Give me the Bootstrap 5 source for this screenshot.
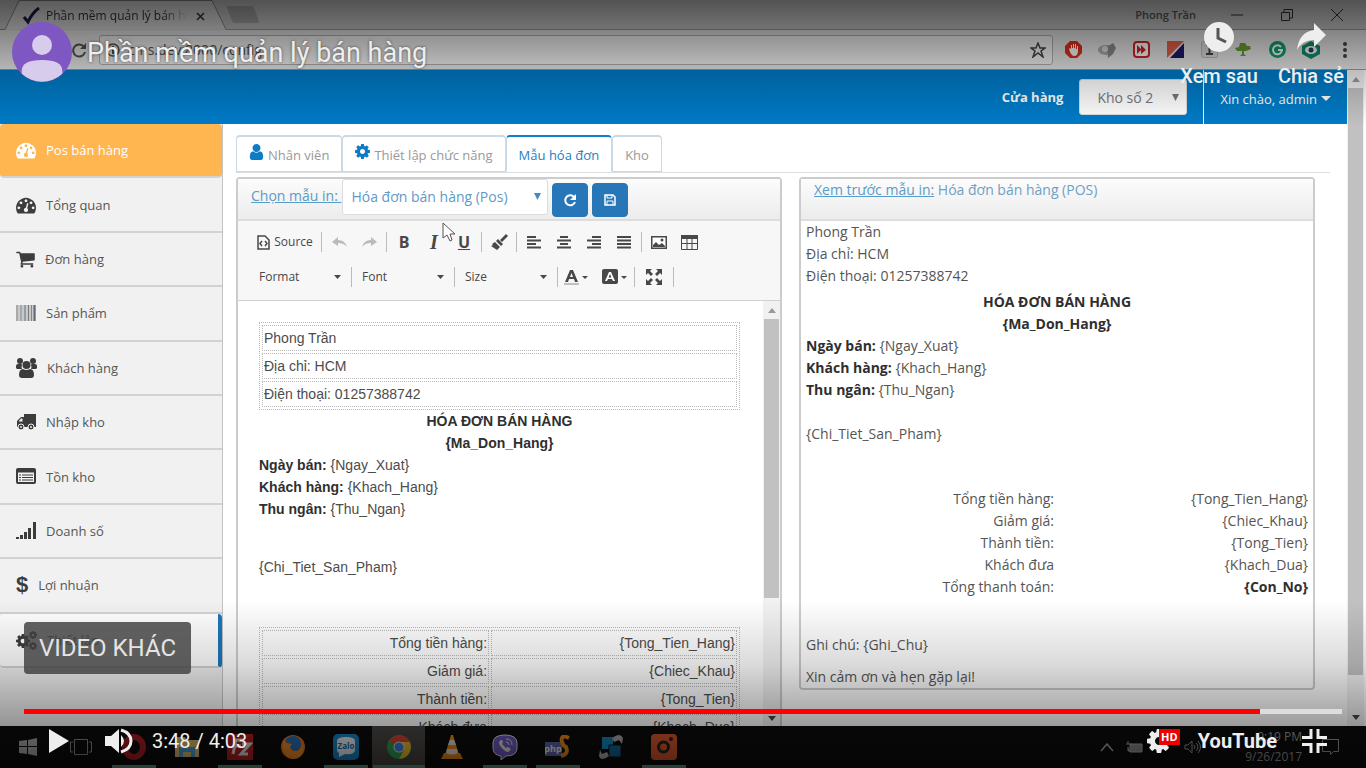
<!DOCTYPE html>
<html lang="vi">
<head>
<meta charset="utf-8">
<meta name="viewport" content="width=device-width, initial-scale=1">
<title>Phần mềm quản lý bán hàng</title>
<link href="https://cdn.jsdelivr.net/npm/bootstrap@5.3.0/dist/css/bootstrap.min.css" rel="stylesheet">
<script defer src="https://cdn.jsdelivr.net/npm/bootstrap@5.3.0/dist/js/bootstrap.bundle.min.js"></script>
<style>
:root { --ui: "Open Sans", "Noto Sans", sans-serif; --yt: Roboto, "Liberation Sans", sans-serif; --doc: "Liberation Sans", Arial, sans-serif; }
body { font: 14px/22px var(--ui); color: #555; background: #000; }
svg { display: block; flex: none; }
button { font: inherit; color: inherit; background: none; border: 0; padding: 0; }
.ic { fill: currentColor; }
/* browser window */
.tabstrip { height: 30px; background: #cdcdcd; color: #333; font-size: 12px; }
.tabstrip .rest { border-bottom: 1px solid #999; }
.profile { font-size: 11px; font-weight: 600; color: #555; }
.page-tab { width: 226px; padding: 2px 18px 0 22px; }
.page-tab svg.outline { position: absolute; left: 0; top: 0; }
.tab-title { width: 142px; overflow: hidden; white-space: nowrap; -webkit-mask-image: linear-gradient(90deg, #000 82%, transparent); mask-image: linear-gradient(90deg, #000 82%, transparent); }
.win-btn { width: 50px; height: 29px; }
.toolbar { height: 40px; background: #e9e9e9; border-bottom: 1px solid #999; padding: 0 4px 0 71px; }
.address { height: 30px; border: 1px solid #b0b0b0; border-radius: 3px; background: #f4f4f4; padding: 0 6px; margin: 0 3px 0 12px; }
.address input { border: 0; background: none; outline: 0; color: #555; font-size: 14px; height: 26px; }
.ext { width: 34px; }
.ext svg { margin: auto; }
/* page */
.viewport { padding-right: 2px; }
.topbar { height: 54px; background: #007bc7; color: #fff; font-size: 13px; }
.topbar .form-select { width: 108px; height: 36px; font-size: 14px; color: #777; background-color: #fff; border: 1px solid #ddd; border-radius: 3px; padding: 0 17px; }
.arrow-select { appearance: none; background: #fff url("data:image/svg+xml,%3Csvg xmlns='http://www.w3.org/2000/svg' viewBox='0 0 14 14' width='7' height='7'%3E%3Cpath d='M0 0h14L7 14z' fill='%23777'/%3E%3C/svg%3E") no-repeat right 7px center; }
.topbar .arrow-select { background-size: 7px 7px; background-position: right 7px top 14px; }
.user-menu, .user-menu:hover { border-left: 1px solid #fff; padding: 3px 16px 0; color: #fff; }
.sidebar { width: 223px; background: #f1f1f1; border-right: 1px solid #c4c4c4; font-size: 13px; }
.sidebar ul { display: grid; grid-auto-rows: 1fr; height: 544px; }
.sidebar a { color: #555; text-decoration: none; padding-left: 16px; gap: 10px; height: 100%; border-bottom: 2px solid #d2d2d2; }
.sidebar svg, .sidebar .dollar { color: #3c3c3c; }
.sidebar a.pos { background: #ffb650; color: #fff; border-radius: 4px; }
.sidebar a.pos svg { color: #fff; }
.sidebar a.current { background: #fff; border-right: 4px solid #1978bd; border-radius: 4px; }
.dollar { font: bold 22px/24px var(--doc); }
.sb { width: 17px; background: #f1f1f1; }
.sb i { height: 18px; flex: none; display: grid; place-items: center; }
.sb b { background: #c1c1c1; margin: 0 1px; }
.page-sb b { flex: 0 1 587px; }
.edit-sb { height: 426px; }
.edit-sb b { height: 279px; }
.content { padding: 11px 17px 0 13px; background: #fff; min-width: 0; }
.content .nav-tabs { border-bottom: 1px solid #ddd; --bs-nav-tabs-border-radius: 4px; }
.content .nav-tabs .nav-link { height: 37px; margin: 0; padding: 7px 12px; font-size: 13px; color: #999; border: 1px solid #c9d9e6; border-width: 2px 1px 1px; display: flex; gap: 4px; }
.content .nav-tabs .nav-link svg { color: #0e7cc4; }
.content .nav-tabs .nav-link.active { color: #2481c2; border-top-color: #0a82cb; border-bottom-color: #fff; }
.panels { display: grid; grid-template-columns: 546fr 516fr; column-gap: 17px; padding: 4px 15px 0 0; }
.box { border: 2px solid #ccc; border-radius: 4px; background: #fff; min-width: 0; }
.box-head { height: 42px; background: linear-gradient(#fcfcfc, #ececec); border-bottom: 2px solid #ddd; color: #6fa0c4; padding-left: 13px; }
.box-head a, .box-head label { color: #5a9bc8; }
.box-head label { padding-right: 1px; }
.box-head .arrow-select { width: 206px; height: 36px; border: 1px solid #ddd; border-radius: 3px; padding: 0 8px; color: #5f9ac6; background-image: url("data:image/svg+xml,%3Csvg xmlns='http://www.w3.org/2000/svg' viewBox='0 0 14 14' width='7' height='7'%3E%3Cpath d='M0 0h14L7 14z' fill='%23428bca'/%3E%3C/svg%3E"); background-position: right 6px top 13px; }
.box-head .btn { width: 36px; height: 34px; background: #2776b8; border-color: #2776b8; border-radius: 4px; padding: 0; display: grid; place-items: center; }
.tools { display: grid; align-content: start; row-gap: 5px; background: #f7f7f7; border-bottom: 1px solid #d1d1d1; padding: 6px 0 0 13px; height: 80px; color: #484848; font-size: 12px; }
.tools button { width: 30px; height: 30px; display: flex; align-items: center; justify-content: center; gap: 4px; }
.tools .source { width: 68px; }
.tools .pick { width: 34px; }
.tools .serif { font-family: "Liberation Serif", serif; }
.tools hr { width: 1px; height: 20px; margin: 5px 2px; border: 0; background: #bbb; opacity: 1; }
.tools select { width: 98px; height: 30px; border: 0; padding: 0 8px; color: #484848; appearance: none; background: url("data:image/svg+xml,%3Csvg xmlns='http://www.w3.org/2000/svg' viewBox='0 0 14 8' width='7' height='4'%3E%3Cpath d='M0 0h14L7 8z' fill='%23484848'/%3E%3C/svg%3E") no-repeat right 8px center; }
.edit-area { font-family: var(--doc); color: #4c4c4c; padding: 21px 23px 0 21px; }
.edit-area table { width: 100%; border: 1px dotted #bbb; border-collapse: separate; border-spacing: 2px; }
.edit-area td { border: 1px dotted #bbb; padding: 1px; }
.edit-area strong, .preview strong { color: #2f2f2f; }
.items-gap { padding: 36px 0 49px; }
.preview { padding: 0 5px; }
.preview table { margin: 21px 0 36px; }
.preview td { padding: 0 3px 0 0; width: 50%; }
.preview td:last-child { padding: 0; }
.thanks + .thanks { margin-top: 10px; }
/* task bar */
.taskbar { height: 42px; background: #0c0c0c; color: #999; padding-left: 1px; }
.task { width: 53px; height: 42px; display: grid; place-items: center; }
.task.open { background: linear-gradient(#5b9c83, #5b9c83) center bottom / 44px 3px no-repeat; }
.task.front { background: linear-gradient(#5b9c83, #5b9c83) center bottom / 52px 3px no-repeat, #4a4744; }
.tray { gap: 12px; padding-right: 27px; }
.tray-clock { font-size: 12px; line-height: 20px; margin-left: 32px; }
/* video player */
.yt-top { position: absolute; inset: 0 0 auto; height: 126px; background: linear-gradient(rgba(0,0,0,.6), rgba(0,0,0,.22) 55%, transparent); padding: 20px 22px 0 12px; font-family: var(--yt); color: #eee; text-shadow: 0 0 3px rgba(0,0,0,.6); }
.yt-top a { color: #eee; text-decoration: none; }
.yt-top h1 { font-size: 27px; line-height: 32px; font-weight: 400; margin: 17px 0 0; }
.avatar { margin-right: 15px; }
.yt-act { font-size: 20px; line-height: 24px; font-weight: 500; }
.yt-bottom { position: absolute; inset: auto 0 0; padding: 22px 24px 0; height: 168px; background: linear-gradient(transparent, rgba(0,0,0,.14) 38%, rgba(0,0,0,.38) 74%, rgba(0,0,0,.6)); font-family: var(--yt); color: #eee; }
.yt-more { height: 52px; width: 167px; border-radius: 4px; background: rgba(62,62,62,.82); font-size: 24px; color: #e4e4e4; align-self: start; }
.yt-bar { height: 5px; border-radius: 0; background: #ddd; margin-top: 35px; --bs-progress-bar-bg: #f00; }
.yt-ctl { height: 54px; padding: 0 15px 0 25px; }
.yt-time { font-size: 20px; margin-left: 19px; }
.yt-name { font: bold 20px/30px var(--yt); color: #eee; text-decoration: none; }
.hd { position: absolute; left: 12px; top: 0; width: 21px; height: 16px; background: #e00; color: #fff; font: bold 11px/16px var(--ui); text-align: center; }
.pointer { position: absolute; left: 204px; top: 43px; z-index: 2; }
.vol { margin-left: 36px; }
.gear { margin-right: 27px; }
.shrink { margin-left: 25px; }
</style>
</head>
<body>
<svg width="0" height="0" class="position-absolute" aria-hidden="true">
 <symbol id="gauge" viewBox="0 0 1792 1792"><path d="M384 1152q0-53-37.500-90.500t-90.500-37.500-90.500 37.500-37.500 90.500 37.500 90.500 90.500 37.500 90.500-37.500 37.500-90.500zm192-448q0-53-37.500-90.500t-90.500-37.500-90.500 37.500-37.500 90.500 37.500 90.500 90.500 37.500 90.500-37.500 37.500-90.500zm428 481l101-382q6-26-7.500-48.500t-38.500-29.500-48 6.500-30 39.500l-101 382q-60 5-107 43.500t-63 98.500q-20 77 20 146t117 89 146-20 89-117q16-60-6-117t-72-91zm660-33q0-53-37.500-90.500t-90.500-37.500-90.500 37.500-37.500 90.500 37.500 90.500 90.500 37.500 90.500-37.500 37.500-90.500zm-640-640q0-53-37.500-90.500t-90.500-37.500-90.500 37.500-37.500 90.500 37.500 90.500 90.500 37.500 90.500-37.500 37.500-90.500zm448 192q0-53-37.500-90.500t-90.500-37.500-90.500 37.500-37.500 90.500 37.500 90.500 90.500 37.500 90.500-37.500 37.500-90.500zm320 448q0 261-141 483-19 29-54 29h-1402q-35 0-54-29-141-221-141-483 0-182 71-348t191-286 286-191 348-71 348 71 286 191 191 286 71 348z"/></symbol>
 <symbol id="cog" viewBox="128 128 1536 1536"><path d="M1152 896q0-106-75-181t-181-75-181 75-75 181 75 181 181 75 181-75 75-181zm512-109v222q0 12-8 23t-20 13l-185 28q-19 54-39 91 35 50 107 138 10 12 10 25t-9 23q-27 37-99 108t-94 71q-12 0-26-9l-138-108q-44 23-91 38-16 136-29 186-7 28-36 28h-222q-14 0-24.500-8.500t-11.500-21.500l-28-184q-49-16-90-37l-141 107q-10 9-25 9-14 0-25-11-126-114-165-168-7-10-7-23 0-12 8-23 15-21 51-66.500t54-70.500q-27-50-41-99l-183-27q-13-2-21-12.500t-8-23.500v-222q0-12 8-23t19-13l186-28q14-46 39-92-40-57-107-138-10-12-10-24 0-10 9-23 26-36 98.500-107.500t94.500-71.500q13 0 26 10l138 107q44-23 91-38 16-136 29-186 7-28 36-28h222q14 0 24.500 8.500t11.500 21.500l28 184q49 16 90 37l142-107q9-9 24-9 13 0 25 10 129 119 165 170 7 8 7 22 0 12-8 23-15 21-51 66.500t-54 70.500q26 50 41 98l183 28q13 2 21 12.500t8 23.500z"/></symbol>
</svg>
<div class="vh-100 d-flex flex-column position-relative overflow-hidden">

 <header>
  <div class="tabstrip d-flex">
   <div class="page-tab position-relative d-flex align-items-center">
    <svg class="outline" width="226" height="30"><path d="M0 29.500H5L19 .500H212L226 29.500" fill="#e2e2e2" stroke="#888"/></svg>
    <svg class="position-relative me-1" width="20" height="18"><path d="M2 10l4 5Q10 6 17 1" fill="none" stroke="#1c1a4c" stroke-width="3"/></svg>
    <span class="tab-title position-relative">Phần mềm quản lý bán hàng</span>
    <button class="position-relative ms-2" aria-label="Đóng thẻ"><svg width="9" height="9"><path d="M1 1l7 7M8 1L1 8" stroke="#333" stroke-width="1.500"/></svg></button>
   </div>
   <div class="rest flex-grow-1 d-flex align-items-center">
    <button aria-label="Thẻ mới" class="me-auto"><svg width="34" height="17"><path d="M1 2Q0 0 3 0H24Q27 0 28 2L33 15Q33 17 31 17H9Q7 17 6 15z" fill="#ababab"/></svg></button>
    <span class="profile me-3">Phong Trần</span>
    <button class="win-btn d-grid" aria-label="Thu nhỏ"><svg class="m-auto" width="12" height="12"><path d="M0 6h12" stroke="#333"/></svg></button>
    <button class="win-btn d-grid" aria-label="Phóng to"><svg class="m-auto" width="12" height="12" fill="none" stroke="#333"><path d="M.500 3.500h8v8h-8zM3 3V.500h8.500V9H9"/></svg></button>
    <button class="win-btn d-grid me-1" aria-label="Đóng"><svg class="m-auto" width="12" height="12" stroke="#333"><path d="M0 0l12 12M12 0L0 12"/></svg></button>
   </div>
  </div>
  <div class="toolbar d-flex align-items-center">
   <button aria-label="Tải lại"><svg width="16" height="16" fill="none" stroke="#555" stroke-width="2"><path d="M13 5A6 6 0 1 0 14 10"/><path d="M15 1v6H9z" fill="#555" stroke="none"/></svg></button>
   <div class="address flex-grow-1 d-flex align-items-center gap-2">
    <svg width="14" height="14" fill="none" stroke="#555"><circle cx="7" cy="7" r="6" stroke-width="1.500"/><path d="M7 3v1M7 6v5" stroke-width="2"/></svg>
    <input class="flex-grow-1 p-0" aria-label="Địa chỉ" value="cms.dev:8000/config">
    <svg width="16" height="16" viewBox="0 0 16 16"><path d="M8 1l2 5h5l-4 3 2 6-5-4-5 4 2-6-4-3h5z" fill="none" stroke="#444" stroke-width="1.500"/></svg>
   </div>
   <div class="ext"><svg width="17" height="17"><path d="M5 0h7l5 5v7l-5 5H5l-5-5V5z" fill="#e0301e"/><path d="M4 8l1-1 1 1V4h1v3h1V3h1v4h1V3h1v5h1V5h1v5q0 5-4 5-3 0-5-7z" fill="#fff"/></svg></div>
   <div class="ext"><svg width="18" height="16"><ellipse cx="8" cy="8" rx="8" ry="5" fill="#aaa"/><path d="M9 5l6-4 3 5-3 6-5 4z" fill="#8c8c8c"/><circle cx="7" cy="7" r="3" fill="#ddd"/></svg></div>
   <div class="ext"><svg width="17" height="17"><rect x="1" y="1" width="15" height="15" rx="3" fill="#fff" stroke="#d0252b" stroke-width="2"/><path d="M4 4l4 4V4l5 5-5 4V9l-4 4z" fill="#d0252b"/></svg></div>
   <div class="ext"><svg width="17" height="17"><path d="M0 0h17L0 17z" fill="#e8604a"/><path d="M17 2v15H3z" fill="#1d1a6a"/></svg></div>
   <div class="ext"><svg width="17" height="17"><rect x=".5" y=".5" width="16" height="16" rx="2" fill="#ddd" stroke="#bbb"/><path d="M5 4h7M5 13h7M8.500 4v9" stroke="#444" stroke-width="2"/></svg></div>
   <div class="ext"><svg width="16" height="14"><path d="M5 0h5l2 3h3l1 3-5 2H9v3l2 2H5l2-2V8H2L0 5l4-1z" fill="#6b9f34"/></svg></div>
   <div class="ext"><svg width="17" height="17"><circle cx="8.500" cy="8.500" r="8.500" fill="#0f9d71"/><path d="M12 6a4.500 4.500 0 1 0 1 3H9" fill="none" stroke="#fff" stroke-width="2"/></svg></div>
   <div class="ext"><svg width="18" height="18"><path d="M9 0l9 5v8l-9 5-9-5V5z" fill="#0f8f6d"/><ellipse cx="9" cy="9" rx="6" ry="4" fill="#fff"/><circle cx="9" cy="9" r="2.500" fill="#246"/></svg></div>
   <button class="ext" aria-label="Menu"><svg width="4" height="16" fill="#444"><circle cx="2" cy="2" r="2"/><circle cx="2" cy="8" r="2"/><circle cx="2" cy="14" r="2"/></svg></button>
  </div>
 </header>

 <div class="viewport flex-grow-1 d-flex overflow-hidden bg-white">
  <div class="flex-grow-1 d-flex flex-column overflow-hidden">
   <div class="topbar d-flex justify-content-end align-items-center flex-shrink-0">
    <label class="fw-bold me-3" for="store">Cửa hàng</label>
    <select id="store" class="form-select arrow-select me-3"><option>Kho số 2</option></select>
    <a class="user-menu text-decoration-none d-flex align-items-center h-100" href="#">Xin chào, admin<svg class="ic ms-1" width="10" height="5"><path d="M0 0h10L5 5z"/></svg></a>
   </div>
   <div class="flex-grow-1 d-flex overflow-hidden">
    <nav class="sidebar flex-shrink-0">
     <ul class="list-unstyled m-0">
      <li><a class="pos d-flex align-items-center" href="#"><svg class="ic" width="20" height="20"><use href="#gauge"/></svg>Pos bán hàng</a></li>
      <li><a class="d-flex align-items-center" href="#"><svg class="ic" width="20" height="20"><use href="#gauge"/></svg>Tổng quan</a></li>
      <li><a class="d-flex align-items-center" href="#"><svg class="ic" width="19" height="20" viewBox="64 0 1664 1792"><path d="M704 1536q0 52-38 90t-90 38-90-38-38-90 38-90 90-38 90 38 38 90zm896 0q0 52-38 90t-90 38-90-38-38-90 38-90 90-38 90 38 38 90zm128-1088v512q0 24-16.500 42.500t-40.500 21.500l-1044 122q13 60 13 70 0 16-24 64h920q26 0 45 19t19 45-19 45-45 19h-1024q-26 0-45-19t-19-45q0-11 8-31.500t16-36 21.500-40 15.500-29.500l-177-823h-204q-26 0-45-19t-19-45 19-45 45-19h256q16 0 28.500 6.500t19.500 15.500 13 24.500 8 26 5.500 29.500 4.500 26h1201q26 0 45 19t19 45z"/></svg>Đơn hàng</a></li>
      <li><a class="d-flex align-items-center" href="#"><svg width="20" height="20"><path d="M0 2h20v16H0z" fill="#c9c9c9"/><path d="M1 2v16M5 2v16" stroke="#888"/><path d="M9 2v16" stroke="#8aa0b0" stroke-width="2"/><path d="M12.500 2v16" stroke="#777"/><path d="M15.500 2v16" stroke="#a77" /><path d="M18.500 2v16" stroke="#667" stroke-width="2"/></svg>Sản phẩm</a></li>
      <li><a class="d-flex align-items-center" href="#"><svg class="ic" width="21" height="20"><circle cx="4" cy="3" r="3"/><circle cx="17" cy="3" r="3"/><path d="M0 10V8q0-2 2-2h3q1 0 1 1-1 2 0 4H1zM21 10V8q0-2-2-2h-3q-1 0-1 1 1 2 0 4h5z"/><circle cx="10.500" cy="7" r="4"/><path d="M3 17q0-6 4-6 3 2 7 0 4 0 4 6 0 3-3 3H6q-3 0-3-3z"/></svg>Khách hàng</a></li>
      <li><a class="d-flex align-items-center" href="#"><svg class="ic" width="20" height="18"><path d="M8 1h12v13H8zM1 14V8l4-4h3v10z"/><path d="M2.500 8.500h4v-3H5z" fill="#f1f1f1"/><g stroke="#f1f1f1"><circle cx="5" cy="14" r="3"/><circle cx="15" cy="14" r="3"/></g><g fill="#f1f1f1"><circle cx="5" cy="14" r="1"/><circle cx="15" cy="14" r="1"/></g></svg>Nhập kho</a></li>
      <li><a class="d-flex align-items-center" href="#"><svg width="20" height="20"><rect x="1" y="2" width="18" height="14" rx="1" fill="#f1f1f1" stroke="#3c3c3c" stroke-width="2"/><path d="M1 4h18" stroke="#3c3c3c" stroke-width="3"/><path d="M3 8h2M6 8h11M3 10.500h2M6 10.500h11M3 13h2M6 13h11" stroke="#3c3c3c"/></svg>Tồn kho</a></li>
      <li><a class="d-flex align-items-center" href="#"><svg class="ic" width="20" height="18"><path d="M0 15h3v2H0zM4 13h3v4H4zM8 10h3v7H8zM12 6h3v11h-3zM17 0h3v17h-3z"/></svg>Doanh số</a></li>
      <li><a class="d-flex align-items-center" href="#"><span class="dollar">$</span>Lợi nhuận</a></li>
      <li><a class="current d-flex align-items-center" href="#"><svg class="ic" width="21" height="20"><use href="#cog" x="0" y="4" width="14" height="14"/><use href="#cog" x="13" y="1" width="8" height="8"/><use href="#cog" x="13" y="12" width="8" height="8"/></svg>Thiết lập</a></li>
     </ul>
    </nav>

    <main class="content flex-grow-1">
     <ul class="nav nav-tabs">
      <li><a class="nav-link" href="#"><svg class="ic" width="15" height="16" viewBox="256 128 1280 1536"><path d="M1536 1399q0 109-62.500 187t-150.500 78h-854q-88 0-150.500-78t-62.500-187q0-85 8.500-160.500t31.500-152 58.500-131 94-89 134.500-34.500q131 128 313 128t313-128q76 0 134.500 34.500t94 89 58.500 131 31.500 152 8.500 160.500zm-256-887q0 159-112.500 271.500t-271.500 112.500-271.500-112.500-112.500-271.500 112.500-271.500 271.500-112.500 271.500 112.500 112.500 271.500z"/></svg>Nhân viên</a></li>
      <li><a class="nav-link" href="#"><svg class="ic" width="15" height="15"><use href="#cog"/></svg>Thiết lập chức năng</a></li>
      <li><a class="nav-link active" href="#" aria-current="page">Mẫu hóa đơn</a></li>
      <li><a class="nav-link" href="#">Kho</a></li>
     </ul>
     <div class="panels">
      <section class="box position-relative">
       <div class="box-head d-flex align-items-start">
        <label for="tpl" class="text-decoration-underline pt-2"><span class="d-block lh-sm">Chọn mẫu in:&nbsp;</span></label>
        <select id="tpl" class="arrow-select me-1"><option>Hóa đơn bán hàng (Pos)</option></select>
        <button class="btn btn-primary mt-1 me-1" aria-label="Tải lại mẫu"><svg width="14" height="14" fill="none" stroke="#fff" stroke-width="2"><path d="M11 4A5 5 0 1 0 12 9"/><path d="M13 1v6H7z" fill="#fff" stroke="none"/></svg></button>
        <button class="btn btn-primary mt-1" aria-label="Lưu mẫu"><svg width="12" height="12"><path d="M1 1h8l2 2v8H1z" fill="none" stroke="#fff" stroke-width="1.500"/><path d="M3 1v3h5V1M3 11V7h6v4" fill="none" stroke="#fff"/></svg></button>
       </div>
       <svg class="pointer" width="14" height="20"><path d="M1 1v15l4-3 3 6 2-1-2-6h5z" fill="#fff" stroke="#555"/></svg>
       <div class="tools">
        <div class="d-flex">
         <button class="source"><svg width="13" height="15" fill="none" stroke="#484848" stroke-width="1.500"><path d="M1 1h7l4 4v9H1z"/><path d="M5 6L3 8.500 5 11M8 6l2 2.500L8 11"/></svg>Source</button><hr>
         <button aria-label="Hoàn tác"><svg width="15" height="12" fill="#bbb"><path d="M0 6l6-5v3q7 0 9 7-3-4-9-4v3z"/></svg></button>
         <button aria-label="Làm lại"><svg width="15" height="12" fill="#bbb"><path d="M15 6L9 1v3Q2 4 0 11q3-4 9-4v3z"/></svg></button><hr>
         <button class="fw-bold fs-6">B</button><button class="serif fw-bold fst-italic fs-5">I</button><button class="fw-bold fs-6 text-decoration-underline">U</button><hr>
         <button aria-label="Sao chép định dạng"><svg width="17" height="16" class="ic"><path d="M15 0l2 2-6 6-2-2zM7 5l5 5-2 2-5-5zM4 8l5 5-3 3-6-4 2-1-1-1z"/></svg></button><hr>
         <button aria-label="Căn trái"><svg width="14" height="13" stroke="#484848" stroke-width="2"><path d="M0 1h9M0 4.500h14M0 8h9M0 11.500h14"/></svg></button>
         <button aria-label="Căn giữa"><svg width="14" height="13" stroke="#484848" stroke-width="2"><path d="M3 1h8M0 4.500h14M3 8h8M0 11.500h14"/></svg></button>
         <button aria-label="Căn phải"><svg width="14" height="13" stroke="#484848" stroke-width="2"><path d="M5 1h9M0 4.500h14M5 8h9M0 11.500h14"/></svg></button>
         <button aria-label="Căn đều"><svg width="14" height="13" stroke="#484848" stroke-width="2"><path d="M0 1h14M0 4.500h14M0 8h14M0 11.500h14"/></svg></button><hr>
         <button aria-label="Hình ảnh"><svg width="16" height="13"><path d="M.750.750h14.500v11.500H.750z" fill="#fff" stroke="#484848" stroke-width="1.500"/><path d="M2 11V9l3-3 3 3 3-2 3 3v1z" fill="#484848"/><circle cx="11" cy="4" r="1.500" fill="#484848"/></svg></button>
         <button aria-label="Bảng"><svg width="17" height="15"><path d="M.500 1.500h16v13H.500zM6 3v11M11 3v11M0 8.500h17" fill="none" stroke="#484848"/><path d="M0 0h17v4H0z" fill="#484848"/></svg></button>
        </div>
        <div class="d-flex">
         <select aria-label="Format"><option>Format</option></select><hr>
         <select aria-label="Font"><option>Font</option></select><hr>
         <select aria-label="Size"><option>Size</option></select><hr>
         <button class="pick" aria-label="Màu chữ"><svg width="26" height="16"><path d="M1 13L6 1h3l5 12h-3l-1-3H5l-1 3zM6 8h3L7.500 4z" fill="#484848"/><path d="M0 15h15" stroke="#888"/><path d="M18 7h6l-3 3z" fill="#484848"/></svg></button>
         <button class="pick ms-1" aria-label="Màu nền"><svg width="26" height="16"><rect width="16" height="15" rx="2" fill="#484848"/><path d="M3 12L7 3h2l4 9h-2l-1-2H6l-1 2zM6.500 8.500h3L8 5z" fill="#fff"/><path d="M19 7h6l-3 3z" fill="#484848"/></svg></button><hr>
         <button class="pick" aria-label="Toàn màn hình"><svg width="16" height="16" fill="#484848"><path d="M0 0h6L4 2l3 3-2 2-3-3-2 2zM16 0v6l-2-2-3 3-2-2 3-3-2-2zM0 16v-6l2 2 3-3 2 2-3 3 2 2zM16 16h-6l2-2-3-3 2-2 3 3 2-2z"/></svg></button><hr>
        </div>
       </div>
       <div class="d-flex">
        <div class="edit-area flex-grow-1">
         <table><tr><td>Phong Trần</td></tr><tr><td>Địa chỉ: HCM</td></tr><tr><td>Điện thoại: 01257388742</td></tr></table>
         <div class="text-center"><strong>HÓA ĐƠN BÁN HÀNG<br>{Ma_Don_Hang}</strong></div>
         <div><strong>Ngày bán:</strong> {Ngay_Xuat}</div>
         <div><strong>Khách hàng:</strong> {Khach_Hang}</div>
         <div><strong>Thu ngân:</strong> {Thu_Ngan}</div>
         <div class="items-gap">{Chi_Tiet_San_Pham}</div>
         <table class="text-end"><colgroup><col width="48%"><col></colgroup>
          <tr><td>Tổng tiền hàng:</td><td>{Tong_Tien_Hang}</td></tr>
          <tr><td>Giảm giá:</td><td>{Chiec_Khau}</td></tr>
          <tr><td>Thành tiền:</td><td>{Tong_Tien}</td></tr>
          <tr><td>Khách đưa</td><td>{Khach_Dua}</td></tr>
         </table>
        </div>
        <div class="sb edit-sb d-flex flex-column">
         <i><svg width="8" height="5"><path d="M0 5h8L4 0z" fill="#999"/></svg></i><b></b><i class="mt-auto"><svg width="8" height="5"><path d="M0 0h8L4 5z" fill="#444"/></svg></i>
        </div>
       </div>
      </section>

      <section class="box align-self-start">
       <div class="box-head"><a href="#">Xem trước mẫu in:</a> Hóa đơn bán hàng (POS)</div>
       <div class="preview">
        <div>Phong Trần</div><div>Địa chỉ: HCM</div><div>Điện thoại: 01257388742</div>
        <div class="text-center pt-1"><strong>HÓA ĐƠN BÁN HÀNG<br>{Ma_Don_Hang}</strong></div>
        <div><strong>Ngày bán:</strong> {Ngay_Xuat}</div>
        <div><strong>Khách hàng:</strong> {Khach_Hang}</div>
        <div><strong>Thu ngân:</strong> {Thu_Ngan}</div>
        <br>
        <div>{Chi_Tiet_San_Pham}</div>
        <br>
        <table class="w-100 text-end">
         <tr><td>Tổng tiền hàng:</td><td>{Tong_Tien_Hang}</td></tr>
         <tr><td>Giảm giá:</td><td>{Chiec_Khau}</td></tr>
         <tr><td>Thành tiền:</td><td>{Tong_Tien}</td></tr>
         <tr><td>Khách đưa</td><td>{Khach_Dua}</td></tr>
         <tr><td>Tổng thanh toán:</td><td><strong>{Con_No}</strong></td></tr>
        </table>
        <div class="thanks">Ghi chú: {Ghi_Chu}</div>
        <div class="thanks">Xin cảm ơn và hẹn gặp lại!</div>
       </div>
      </section>
     </div>
    </main>
   </div>
  </div>
  <div class="sb page-sb d-flex flex-column">
   <i><svg width="8" height="5"><path d="M0 5h8L4 0z" fill="#999"/></svg></i><b></b><i class="mt-auto"><svg width="8" height="5"><path d="M0 0h8L4 5z" fill="#444"/></svg></i>
  </div>
 </div>

 <footer class="taskbar d-flex align-items-center flex-shrink-0">
  <div class="task"><svg width="18" height="18" fill="#aaa"><path d="M0 3l8-1v6H0zM9 2l9-2v8H9zM0 9h8v7l-8-1zM9 9h9v9l-9-2z"/></svg></div>
  <div class="task"><svg width="22" height="16" fill="none" stroke="#888"><path d="M4.500.500h13v15h-13zM3 3H.500v10H3M19 3h2.500v10H19"/></svg></div>
  <div class="task open"><svg width="26" height="26"><ellipse cx="13" cy="13" rx="9" ry="10" fill="none" stroke="#a81c26" stroke-width="6"/></svg></div>
  <div class="task"><svg width="24" height="20"><path d="M0 0h10l2 3h12v17H0z" fill="#dcb767"/><path d="M4 10h16v10h-4v-5H8v5H4z" fill="#4a9fd0"/></svg></div>
  <div class="task open"><svg width="26" height="26"><path d="M0 0h26v26H0z" fill="#b81c1f"/><path d="M6 20L9 6h7M8 12h6M15 10h8l-9 10h7" fill="none" stroke="#ddd" stroke-width="3"/></svg></div>
  <div class="task"><svg width="24" height="24"><circle cx="12" cy="12" r="12" fill="#dd741c"/><circle cx="12" cy="9" r="8" fill="#2d6db5"/><path d="M2 5q2 1 4 3l5 1-2 3q1 4 6 4 5 0 7-7 2 14-10 15Q0 22 2 5z" fill="#f08a24"/></svg></div>
  <div class="task open"><svg width="26" height="26"><rect width="26" height="26" rx="5" fill="#1784c9"/><path d="M4 7q0-4 9-4t9 4v9q0 5-10 4l-6 3v-4q-2-1-2-3z" fill="#eee"/><text x="13" y="15" text-anchor="middle" font-size="8" font-weight="700" fill="#1769b0">Zalo</text></svg></div>
  <div class="task front"><svg width="24" height="24"><circle cx="12" cy="12" r="12" fill="#2f9e4f"/><path d="M12 12L2 6a12 12 0 0 1 20.500 0z" fill="#d64436"/><path d="M12 7h10.800A12 12 0 0 1 12 24l5-9z" fill="#e9bd2c"/><circle cx="12" cy="12" r="5.500" fill="#ddd"/><circle cx="12" cy="12" r="4.500" fill="#3f7fe0"/></svg></div>
  <div class="task"><svg width="22" height="26"><path d="M3 19h16l3 6H0z" fill="#e88614"/><path d="M10 1h2l6 20q-7 4-14 0z" fill="#f18b16"/><path d="M9 6h4l2 5H7zM6 15h10l1 4q-6 3-12 0z" fill="#ddd"/></svg></div>
  <div class="task open"><svg width="26" height="26"><path d="M1 9q0-8 12-8t12 8v5q0 8-11 8l-5 4v-4q-8-1-8-8z" fill="#6e5bc0" stroke="#ddd"/><path d="M9 6q-4 2 0 7t7 5q4-2 2-4l-3-1-1 1-4-4 1-2-1-2z" fill="#ddd"/><path d="M14 5q6 0 6 6M14 8q3 0 3 3" fill="none" stroke="#ddd"/></svg></div>
  <div class="task open"><svg width="26" height="24"><path d="M0 7h17v14H0z" fill="#5a61a8"/><text x="8" y="17" text-anchor="middle" font-size="9" font-weight="700" fill="#eee">php</text><path d="M24 3q-9-4-7 4 1 4 4 5 3 7-5 9" fill="none" stroke="#e88a1c" stroke-width="4"/></svg></div>
  <div class="task"><svg width="26" height="24"><path d="M4 2h11v12H4z" fill="#1687c0"/><path d="M11 10h12v12H11z" fill="#126396" stroke="#0c0c0c"/><path d="M14 3q8-6 11 0l-1 6-3-4-5 2zM11 21q-8 6-10 0l1-6 2 4 5-2z" fill="#aaa"/></svg></div>
  <div class="task open"><svg width="26" height="26"><rect width="26" height="26" rx="4" fill="#d9572c"/><circle cx="12.500" cy="13" r="5" fill="none" stroke="#222" stroke-width="3"/><circle cx="20" cy="5" r="2" fill="#222"/></svg></div>
  <div class="tray ms-auto d-flex align-items-center">
   <svg width="14" height="9"><path d="M1 8l6-7 6 7" fill="none" stroke="#aaa" stroke-width="1.500"/></svg>
   <svg width="17" height="12"><path d="M4 3h12v8H4zM0 3h5M2 0v3M2 6v4h2" fill="#888" stroke="#aaa"/></svg>
   <svg width="17" height="14" fill="none" stroke="#999"><path d="M2 7q6-6 12 0M4 10q4-4 8 0"/></svg>
   <svg width="17" height="14" fill="none" stroke="#999"><path d="M1 5h3l4-4v12L4 9H1zM10 5q2 2 0 4M12 3q4 4 0 8M14 1q5 6 0 12"/></svg>
   <div class="tray-clock text-end">9:19 PM<br>9/26/2017</div>
   <svg class="ms-2" width="17" height="17"><path d="M.500.500h16v12h-5l-3 3v-3h-8z" fill="none" stroke="#999"/></svg>
  </div>
 </footer>

 <div class="yt-top d-flex">
  <svg width="60" height="62" viewBox="0 -2 60 62" class="avatar"><circle cx="30" cy="30" r="30" fill="#7e57c2"/><circle cx="30" cy="23" r="10" fill="#d8ccec"/><path d="M10 52q-3-14 20-14t20 14a30 30 0 0 1-40 0z" fill="#d8ccec"/></svg>
  <h1 class="flex-grow-1"><a href="#">Phần mềm quản lý bán hàng</a></h1>
  <button class="yt-act align-self-start d-flex flex-column align-items-center me-3"><svg width="32" height="44"><circle cx="16" cy="17" r="15" fill="#eee"/><path d="M15 8v10l8 4" fill="none" stroke="#555" stroke-width="3"/></svg>Xem sau</button>
  <button class="yt-act align-self-start d-flex flex-column align-items-center ms-1"><svg width="32" height="44"><path d="M19 3l12 12-12 12v-7Q7 20 2 30 4 12 19 10z" fill="#eee"/></svg>Chia sẻ</button>
 </div>

 <div class="yt-bottom d-flex flex-column">
  <button class="yt-more">VIDEO KHÁC</button>
  <div class="yt-bar progress" role="progressbar" aria-label="Tiến độ" aria-valuenow="94" aria-valuemin="0" aria-valuemax="100"><div class="progress-bar" style="width:93.8%"></div></div>
  <div class="yt-ctl d-flex align-items-center">
   <button aria-label="Phát"><svg width="20" height="24" fill="#eee"><path d="M0 0l20 12L0 24z"/></svg></button>
   <button class="vol" aria-label="Âm lượng"><svg width="28" height="26"><path d="M0 8h6l8-7v24l-8-7H0z" fill="#eee"/><path d="M16 7q6 6 0 12z" fill="#eee"/><path d="M16 2q10 3 10 11T16 24" fill="none" stroke="#eee" stroke-width="3"/></svg></button>
   <span class="yt-time me-auto">3:48 / 4:03</span>
   <button class="position-relative gear" aria-label="Cài đặt"><svg width="24" height="24" fill="#eee"><use href="#cog"/></svg><span class="hd">HD</span></button>
   <a class="yt-name" href="#">YouTube</a>
   <button class="shrink" aria-label="Thoát toàn màn hình"><svg width="25" height="24" fill="none" stroke="#eee" stroke-width="3"><path d="M9 0v8.500H0M16 0v8.500h9M9 24v-8.500H0M16 24v-8.500h9"/></svg></button>
  </div>
 </div>
</div>
</body>
</html>
